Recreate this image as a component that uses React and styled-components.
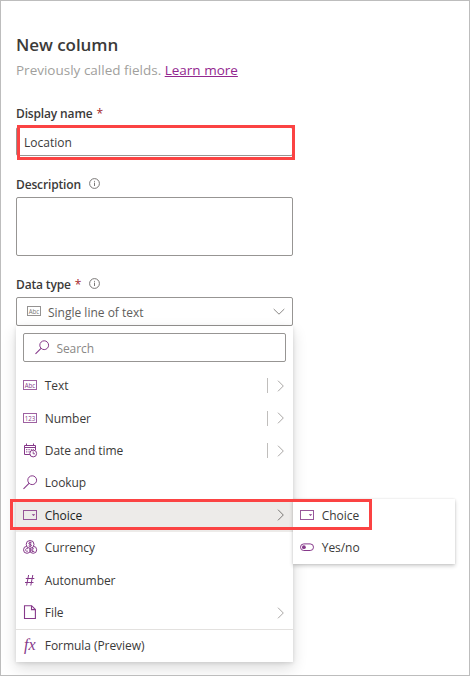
import React from "react";
import styled, { createGlobalStyle } from "styled-components";

const PURPLE = "#86398a";

const BoxIcon = ({ text, color = PURPLE }) => (
  <svg width="15" height="11" viewBox="0 0 15 11">
    <rect x="0.5" y="0.5" width="13" height="9" fill="none" stroke={color} strokeOpacity="0.8" />
    <text
      x="7"
      y="7.6"
      fontSize="6.8"
      fontFamily="Open Sans, sans-serif"
      fontWeight="500"
      textAnchor="middle"
      textLength="10.5"
      lengthAdjust="spacingAndGlyphs"
      fill={color}
    >
      {text}
    </text>
  </svg>
);

const CalendarIcon = () => (
  <svg width="15" height="15" viewBox="0 0 15 15" fill="none" stroke={PURPLE}>
    <path d="M7 11.5H1.5V2.5H12.5V7" />
    <path d="M1 4.5H13M3.5 0.5V3M10.5 0.5V3" />
    <path d="M3 6.7H11M3 8.9H7" strokeDasharray="1.4 1" strokeWidth="0.9" />
    <circle cx="10.2" cy="10.5" r="3.4" fill="#fff" />
    <path d="M10.2 8.4V10.8H12" strokeWidth="0.9" />
  </svg>
);

const SearchIcon = () => (
  <svg width="15" height="15" viewBox="0 0 15 15" fill="none" stroke={PURPLE}>
    <circle cx="9.2" cy="5.2" r="4.4" />
    <path d="M6 8.3L0.5 13.8" strokeWidth="1.1" />
  </svg>
);

const ChoiceIcon = () => (
  <svg width="15" height="11" viewBox="0 0 15 11">
    <rect x="0.5" y="0.5" width="13" height="9" fill="none" stroke={PURPLE} strokeOpacity="0.85" />
    <path d="M8.8 4.2H12.2L10.5 6.1Z" fill={PURPLE} />
  </svg>
);

const CurrencyIcon = () => (
  <svg width="15" height="15" viewBox="0 0 15 15" fill="none" stroke={PURPLE}>
    <circle cx="4" cy="9.8" r="3.5" />
    <circle cx="10.2" cy="9.8" r="3.5" />
    <circle cx="7.1" cy="4.4" r="3.9" fill="#fff" />
    <path d="M8.6 2.9C7.6 2.2 5.8 2.3 5.8 3.4C5.8 4.7 8.5 4 8.5 5.4C8.5 6.5 6.6 6.6 5.6 5.9M7.1 1.6V7.2" />
    <path d="M5 8.8C3.8 8 2.6 8.7 2.6 9.9C2.6 11.2 4 11.7 5 11M9 11.5V9.2C9 8.2 10.4 8.1 10.9 8.8M8.4 10H10.4M9 11.5H11.3" strokeWidth="0.9" />
  </svg>
);

const HashIcon = () => (
  <svg width="15" height="13" viewBox="0 0 15 13" fill="none" stroke={PURPLE}>
    <path d="M5.6 1L3.6 11.5M9.8 1L7.8 11.5M2.8 4.5H11.3M2 8.5H10.5" />
  </svg>
);

const FileIcon = () => (
  <svg width="15" height="15" viewBox="0 0 15 15" fill="none" stroke={PURPLE} strokeWidth="1.1">
    <path d="M1.5 0.7H8.6L12.4 4.5V13.5H1.5Z" />
    <path d="M8.5 0.8V4.6H12.3" />
  </svg>
);

const ToggleIcon = () => (
  <svg width="15" height="9" viewBox="0 0 15 9">
    <rect x="0.5" y="0.9" width="13" height="6.6" rx="3.3" fill="none" stroke={PURPLE} />
    <circle cx="3.9" cy="4.2" r="1.9" fill={PURPLE} />
  </svg>
);

const InfoIcon = () => (
  <svg width="11" height="11" viewBox="0 0 11 11" fill="none" stroke="#6a6866" strokeWidth="0.9">
    <circle cx="5.5" cy="5.5" r="4.9" />
    <path d="M5.5 4.6V8M5.5 2.9V3.8" />
  </svg>
);

const ChevronRight = ({ color = "#a8a6a4" }) => (
  <svg width="8" height="12" viewBox="0 0 8 12" fill="none" stroke={color}>
    <path d="M1 0.7L6.3 6L1 11.3" />
  </svg>
);

const ChevronDown = () => (
  <svg width="12" height="8" viewBox="0 0 12 8" fill="none" stroke="#8a8886">
    <path d="M0.7 1L6 6.2L11.3 1" />
  </svg>
);

const types = [
  { label: "Text", icon: <BoxIcon text="Abc" />, arrow: true, split: true },
  { label: "Number", icon: <BoxIcon text="123" />, arrow: true, split: true },
  { label: "Date and time", icon: <CalendarIcon />, arrow: true, split: true },
  { label: "Lookup", icon: <SearchIcon /> },
  { label: "Choice", icon: <ChoiceIcon />, arrow: true, active: true },
  { label: "Currency", icon: <CurrencyIcon /> },
  { label: "Autonumber", icon: <HashIcon /> },
  { label: "File", icon: <FileIcon />, arrow: true },
];

const App = () => {
  return (
    <>
      <GlobalStyle />
      <Page>
        <Title>New column</Title>
        <Subtitle>
          Previously called fields. <Link href="#">Learn more</Link>
        </Subtitle>

        <Label $height={28} $gap={18}>
          Display name <Required>*</Required>
        </Label>
        <TextBox>
          Location
          <Highlight $left={0} $top={-3} $width={278} $height={35} />
        </TextBox>

        <Label $height={26} $gap={15}>
          Description <InfoIcon />
        </Label>
        <TextArea />

        <Label $height={26} $gap={15}>
          Data type <Required>*</Required> <InfoIcon />
        </Label>
        <Select>
          <BoxIcon text="Abc" color="#797775" />
          <span>Single line of text</span>
          <ChevronDown />
        </Select>
        <Panel>
          <SearchBox>
            <SearchIcon />
            <span>Search</span>
          </SearchBox>
          {types.map((type) => (
            <Item key={type.label} $active={type.active}>
              <IconCell>{type.icon}</IconCell>
              <ItemText>{type.label}</ItemText>
              {type.split ? <Separator /> : <></>}
              {type.arrow ? <ChevronRight color={type.active ? "#797775" : undefined} /> : <></>}
            </Item>
          ))}
          <Item $divided>
            <IconCell>
              <Fx>fx</Fx>
            </IconCell>
            <ItemText>Formula (Preview)</ItemText>
          </Item>
          <SubMenu>
            <Item>
              <IconCell>
                <ChoiceIcon />
              </IconCell>
              <ItemText>Choice</ItemText>
            </Item>
            <Item>
              <IconCell>
                <ToggleIcon />
              </IconCell>
              <ItemText>Yes/no</ItemText>
            </Item>
          </SubMenu>
          <Highlight $left={-6} $top={173} $width={362} $height={31} />
        </Panel>
      </Page>
    </>
  );
};

export default App;

const GlobalStyle = createGlobalStyle`
  * {
    box-sizing: border-box;
  }
  body {
    margin: 0;
    background: #fff;
    font-family: "Open Sans", "Noto Sans", sans-serif;
    font-size: 12px;
    color: #3b3a39;
  }
  svg {
    display: block;
    flex-shrink: 0;
  }
`;

const Page = styled.div`
  width: 470px;
  height: 676px;
  padding: 30px 15px 0;
  border: 1px solid #bdbdbd;
  overflow: hidden;
`;

const Title = styled.h1`
  margin: 0;
  height: 28px;
  line-height: 27px;
  font-size: 17px;
  font-weight: 600;
  letter-spacing: -0.05px;
  color: #3b3a39;
`;

const Subtitle = styled.div`
  height: 22px;
  line-height: 22px;
  font-size: 13.5px;
  color: #a19f9d;
`;

const Link = styled.a`
  color: #93278f;
`;

const Label = styled.div`
  display: flex;
  align-items: center;
  height: ${(props) => props.$height}px;
  margin-top: ${(props) => props.$gap}px;
  font-weight: 600;
  letter-spacing: -0.15px;
  color: #3b3a39;

  svg {
    margin: -2px 0 0 8px;
  }
`;

const Required = styled.span`
  margin-left: 4px;
  font-weight: 400;
  color: #a4262c;
`;

const TextBox = styled.div`
  position: relative;
  display: flex;
  align-items: center;
  width: 277px;
  height: 29px;
  padding: 2px 0 0 7px;
  border: 1px solid #979593;
  border-radius: 2px;
`;

const TextArea = styled.div`
  width: 277px;
  height: 59px;
  border: 1px solid #979593;
  border-radius: 2px;
`;

const Select = styled.div`
  display: flex;
  align-items: center;
  width: 277px;
  height: 29px;
  padding: 0 7px 0 10px;
  border: 1px solid #979593;
  border-radius: 2px;
  color: #605e5c;

  span {
    flex: 1;
    margin: 2px 0 0 6px;
  }
`;

const Panel = styled.div`
  position: relative;
  width: 277px;
  height: 336px;
  padding-top: 7px;
  background: #fff;
  box-shadow: 0 6px 14px rgba(0, 0, 0, 0.14), 0 1px 4px rgba(0, 0, 0, 0.12);
`;

const SearchBox = styled.div`
  display: flex;
  align-items: center;
  height: 29px;
  margin: 0 7px 7.6px;
  padding-left: 11px;
  border: 1px solid #979593;
  border-radius: 2px;
  color: #8a8886;

  span {
    margin: 2px 0 0 6.5px;
    letter-spacing: -0.1px;
  }
`;

const Item = styled.div`
  display: flex;
  align-items: center;
  height: 32.4px;
  padding: 0 8px 0 7px;
  background: ${(props) => (props.$active ? "#edebe9" : "transparent")};
  color: ${(props) => (props.$active ? "#201f1e" : "#3b3a39")};
  border-top: ${(props) => (props.$divided ? "1px solid #e3e1df" : "none")};
`;

const IconCell = styled.div`
  display: flex;
  width: 15px;
  margin-right: 6.8px;
`;

const ItemText = styled.span`
  flex: 1;
  letter-spacing: -0.06px;
`;

const Separator = styled.div`
  width: 1px;
  height: 15px;
  margin-right: 9px;
  background: #c0bebc;
`;

const Fx = styled.span`
  padding-left: 1px;
  font-family: "Liberation Serif", serif;
  font-size: 16px;
  font-style: italic;
  line-height: 16px;
  color: ${PURPLE};
`;

const SubMenu = styled.div`
  position: absolute;
  left: 277px;
  top: 173px;
  width: 162px;
  background: #fff;
  box-shadow: 0 2px 4px rgba(0, 0, 0, 0.2), 0 0 2px rgba(0, 0, 0, 0.1);
`;

/* red call-out frame drawn over the form */
const Highlight = styled.div`
  position: absolute;
  left: ${(props) => props.$left}px;
  top: ${(props) => props.$top}px;
  width: ${(props) => props.$width}px;
  height: ${(props) => props.$height}px;
  border: 3px solid #fb4343;
`;
